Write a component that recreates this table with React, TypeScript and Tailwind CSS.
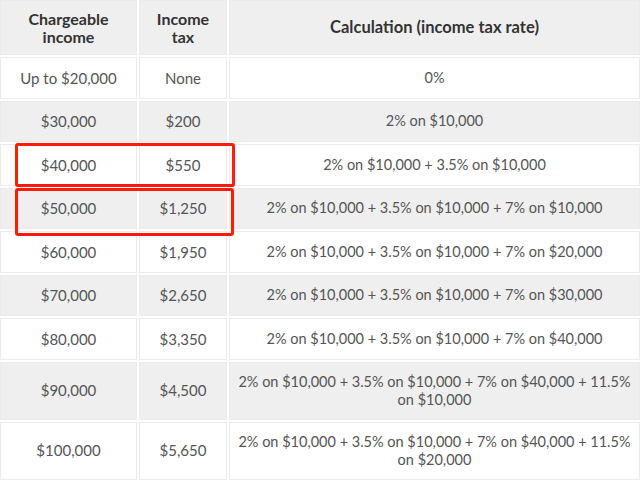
import React from "react";

const rows: { income: string; tax: string; calc: string[] }[] = [
  { income: "Up to $20,000", tax: "None", calc: ["0%"] },
  { income: "$30,000", tax: "$200", calc: ["2% on $10,000"] },
  { income: "$40,000", tax: "$550", calc: ["2% on $10,000 + 3.5% on $10,000"] },
  { income: "$50,000", tax: "$1,250", calc: ["2% on $10,000 + 3.5% on $10,000 + 7% on $10,000"] },
  { income: "$60,000", tax: "$1,950", calc: ["2% on $10,000 + 3.5% on $10,000 + 7% on $20,000"] },
  { income: "$70,000", tax: "$2,650", calc: ["2% on $10,000 + 3.5% on $10,000 + 7% on $30,000"] },
  { income: "$80,000", tax: "$3,350", calc: ["2% on $10,000 + 3.5% on $10,000 + 7% on $40,000"] },
  {
    income: "$90,000",
    tax: "$4,500",
    calc: ["2% on $10,000 + 3.5% on $10,000 + 7% on $40,000 + 11.5%", "on $10,000"],
  },
  {
    income: "$100,000",
    tax: "$5,650",
    calc: ["2% on $10,000 + 3.5% on $10,000 + 7% on $40,000 + 11.5%", "on $20,000"],
  },
];

export default function App() {
  return (
    <div className="relative w-[640px] h-[481px] overflow-hidden bg-white font-['Lato',sans-serif] text-[15px] text-[#555]">
      <table className="w-[644px] -ml-[2px] -mt-[2px] border-separate border-spacing-[2px] text-center">
        <thead>
          <tr className="h-[55px]">
            <th className="w-[137px] bg-[#efefef] border border-[#ebebeb] text-[16px] font-bold text-[#333] leading-[18px]">
              Chargeable
              <br />
              income
            </th>
            <th className="w-[88px] bg-[#efefef] border border-[#ebebeb] text-[16px] font-bold text-[#333] leading-[18px]">
              Income
              <br />
              tax
            </th>
            <th className="bg-[#efefef] border border-[#ebebeb] text-[16.5px] font-bold text-[#333]">
              Calculation (income tax rate)
            </th>
          </tr>
        </thead>
        <tbody>
          {rows.map((r, i) => {
            const bg = i % 2 === 0 ? "bg-white" : "bg-[#efefef]";
            const tall = r.calc.length > 1;
            return (
              <tr key={r.income} className={tall ? "h-[58px]" : "h-[41.5px]"}>
                <td className={`${bg} border border-[#ebebeb]`}>{r.income}</td>
                <td className={`${bg} border border-[#ebebeb]`}>{r.tax}</td>
                <td className={`${bg} border border-[#ebebeb] text-[14.5px] leading-[18px]`}>
                  {r.calc.map((line, j) => (
                    <div key={j}>{line}</div>
                  ))}
                </td>
              </tr>
            );
          })}
        </tbody>
      </table>
      <div className="absolute left-[15px] top-[143px] w-[220px] h-[44px] border-[3px] border-[#ff1a0a] rounded-[3px]" />
      <div className="absolute left-[15px] top-[188px] w-[219px] h-[48px] border-[3px] border-[#ff1a0a] rounded-[3px]" />
    </div>
  );
}
